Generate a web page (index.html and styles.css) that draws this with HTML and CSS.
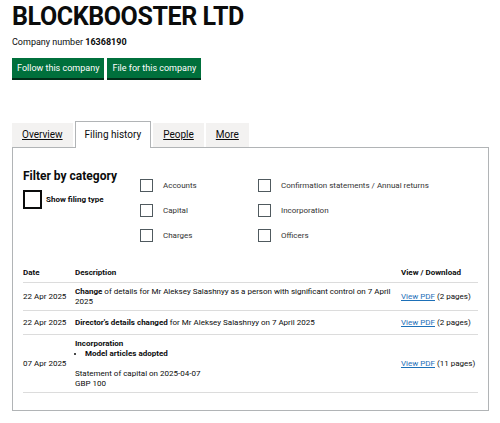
FILE: index.html
```html
<!DOCTYPE html>
<html lang="en">
  <head>
    <meta charset="UTF-8" />
    <title>BLOCKBOOSTER LTD - Filing history</title>
    <link rel="stylesheet" href="styles.css">
  </head>
  <body>
    <div class="page">
      <!-- Company header -->
      <h1 class="company-name">BLOCKBOOSTER LTD</h1>
      <p class="company-number">Company number <strong>16368190</strong></p>
      <div class="actions">
        <a class="button" href="#">Follow this company</a>
        <a class="button" href="#">File for this company</a>
      </div>

      <!-- Tabs -->
      <ul class="tabs">
        <li class="tab"><a href="#">Overview</a></li>
        <li class="tab selected"><a href="#">Filing history</a></li>
        <li class="tab"><a href="#">People</a></li>
        <li class="tab"><a href="#">More</a></li>
      </ul>

      <div class="panel">
        <!-- Filters -->
        <div class="filters">
          <div class="filter-intro">
            <h2 class="filter-title">Filter by category</h2>
            <label class="show-type">
              <span class="big-box"></span>
              <span>Show filing type</span>
            </label>
          </div>
          <div class="categories">
            <label class="category"><span class="box"></span>Accounts</label>
            <label class="category"><span class="box"></span>Confirmation statements / Annual returns</label>
            <label class="category"><span class="box"></span>Capital</label>
            <label class="category"><span class="box"></span>Incorporation</label>
            <label class="category"><span class="box"></span>Charges</label>
            <label class="category"><span class="box"></span>Officers</label>
          </div>
        </div>

        <!-- Filing history table -->
        <table class="filings">
          <thead>
            <tr>
              <th class="col-date">Date</th>
              <th>Description</th>
              <th class="col-view">View / Download</th>
            </tr>
          </thead>
          <tbody>
            <tr>
              <td>22 Apr 2025</td>
              <td><strong>Change</strong> of details for Mr Aleksey Salashnyy as a person with significant control on 7 April 2025</td>
              <td class="view"><a href="#">View PDF</a> (2 pages)</td>
            </tr>
            <tr>
              <td>22 Apr 2025</td>
              <td><strong>Director's details changed</strong> for Mr Aleksey Salashnyy on 7 April 2025</td>
              <td class="view"><a href="#">View PDF</a> (2 pages)</td>
            </tr>
            <tr>
              <td>07 Apr 2025</td>
              <td>
                <strong>Incorporation</strong>
                <ul class="resolutions">
                  <li>Model articles adopted</li>
                </ul>
                <p class="capital">Statement of capital on 2025-04-07<br>GBP 100</p>
              </td>
              <td class="view"><a href="#">View PDF</a> (11 pages)</td>
            </tr>
          </tbody>
        </table>
      </div>
    </div>
  </body>
</html>
```

FILE: styles.css
```css
* {
  box-sizing: border-box;
}
html,
body {
  margin: 0;
  padding: 0;
  background: #ffffff;
  color: #0b0c0c;
  font-family: Roboto, "Liberation Sans", Arial, sans-serif;
}
.page {
  padding: 2px 11px 0 12px;
}
.company-name {
  margin: 0;
  font-size: 25px;
  line-height: 30px;
  font-weight: 700;
  letter-spacing: -0.4px;
}
.company-number {
  margin: 4px 0 0;
  font-size: 9px;
  line-height: 12px;
}
.actions {
  display: flex;
  gap: 3px;
  margin-top: 10px;
}
.button {
  display: block;
  background: #00703c;
  color: #ffffff;
  text-decoration: none;
  font-size: 9px;
  line-height: 12px;
  padding: 4px 5px;
  box-shadow: 0 2px 0 #002d18;
}

/* Tabs */
.tabs {
  display: flex;
  align-items: flex-end;
  list-style: none;
  margin: 43px 0 0;
  padding: 0;
  font-size: 10px;
  line-height: 13px;
}
.tab {
  background: #f3f2f1;
  margin-right: 2px;
  padding: 5px 10px 6px;
}
.tab a {
  color: #0b0c0c;
}
.tab.selected {
  background: #ffffff;
  border: 1px solid #b1b4b6;
  border-bottom: 0;
  padding: 6px 9px 7px;
  margin-bottom: -1px;
  position: relative;
}
.tab.selected a {
  text-decoration: none;
}
.panel {
  border: 1px solid #b1b4b6;
  padding: 21px 10px 17px;
}

/* Filters */
.filters {
  display: flex;
}
.filter-intro {
  width: 117px;
}
.filter-title {
  margin: 0;
  font-size: 12px;
  line-height: 15px;
  font-weight: 700;
}
.show-type {
  display: flex;
  align-items: center;
  gap: 4px;
  margin-top: 6px;
  font-size: 8px;
  font-weight: 700;
  line-height: 12px;
}
.big-box {
  width: 19px;
  height: 19px;
  border: 2px solid #0b0c0c;
  flex: none;
}
.categories {
  display: grid;
  grid-template-columns: 118px auto;
  row-gap: 12px;
  padding-top: 10px;
}
.category {
  display: flex;
  align-items: center;
  gap: 10px;
  font-size: 8px;
  line-height: 13px;
  color: #333333;
}
.box {
  width: 13px;
  height: 13px;
  border: 1.5px solid #505a5f;
  flex: none;
}

/* Table */
.filings {
  width: 455px;
  margin-top: 21px;
  border-collapse: collapse;
  font-size: 8px;
  line-height: 10px;
}
.filings th {
  text-align: left;
  font-weight: 700;
  padding: 5px 0 4px;
  border-bottom: 1px solid #dcdcdc;
}
.filings td {
  padding: 4px 0 3px;
  border-bottom: 1px solid #dcdcdc;
  vertical-align: middle;
}
.col-date {
  width: 52px;
}
.col-view {
  width: 77px;
}
.filings td.view {
  line-height: 16px;
}
.view a {
  color: #1d70b8;
}
.resolutions {
  margin: 0;
  padding-left: 10px;
  font-weight: 700;
}
.capital {
  margin: 10px 0 0;
}
```
